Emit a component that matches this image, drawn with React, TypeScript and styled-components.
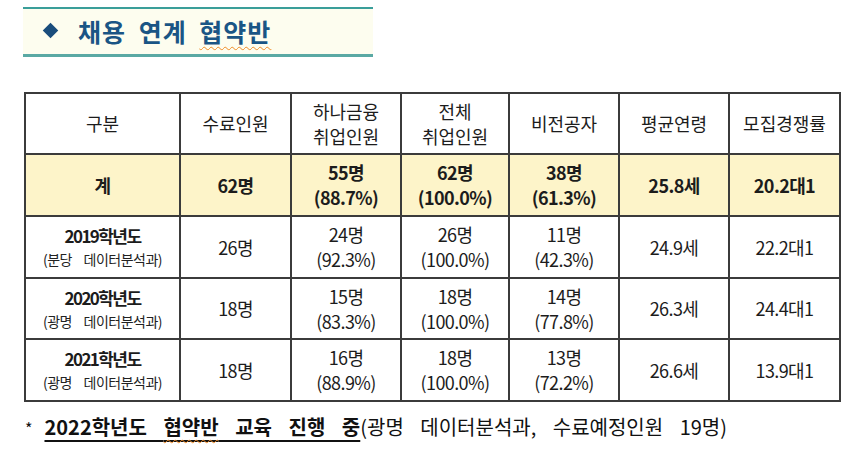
import React from "react";
import styled, { createGlobalStyle } from "styled-components";

const Global = createGlobalStyle`
  html, body { margin: 0; padding: 0; background: #ffffff; }
  body { font-family: "Noto Sans CJK KR", "Noto Sans", sans-serif; color: #111; }
`;

const Page = styled.div`
  width: 865px;
  height: 456px;
  padding: 7px 0 0 23px;
  box-sizing: border-box;
  display: flex;
  flex-direction: column;
`;

const TitleBox = styled.div`
  width: 350px;
  height: 50px;
  box-sizing: border-box;
  border-top: 2px solid #3a9e9a;
  border-bottom: 3px solid #5aa9a4;
  background: #fdfdef;
  display: flex;
  align-items: center;
  gap: 22px;
  padding-left: 22px;
  padding-bottom: 2px;
`;

const Diamond = styled.span`
  width: 11px;
  height: 11px;
  background: #1a4d7c;
  transform: rotate(45deg);
  display: inline-block;
`;

const TitleText = styled.h1`
  margin: 0;
  font-size: 25px;
  font-weight: 700;
  color: #1a5585;
  letter-spacing: 1px;
  word-spacing: 6px;
  line-height: 30px;
`;

const Squiggle = styled.span`
  text-decoration: underline wavy #f08a24;
  text-decoration-thickness: 1px;
  text-underline-offset: 4px;
`;

const Table = styled.table`
  margin-top: 35px;
  margin-left: 1px;
  border-collapse: collapse;
  table-layout: fixed;
  width: 815px;
  font-size: 18px;
`;

const Row = styled.tr<{ $h: number; $total?: boolean }>`
  height: ${(p) => p.$h}px;
  background: ${(p) => (p.$total ? "#fdf4c9" : "#ffffff")};
  font-weight: ${(p) => (p.$total ? 700 : 400)};
`;

const Cell = styled.td<{ $head?: boolean }>`
  border: 2px solid #3b3b3b;
  text-align: center;
  vertical-align: middle;
  padding: 0;
  line-height: 25px;
  color: #1c1c1c;
  letter-spacing: ${(p) => (p.$head ? "0px" : "-0.6px")};
  font-weight: inherit;
`;

const Year = styled.div`
  font-weight: 700;
  font-size: 17px;
  line-height: 24px;
  letter-spacing: -1.6px;
`;

const Dept = styled.div`
  font-size: 14px;
  line-height: 22px;
  color: #222;
  letter-spacing: -0.5px;
  word-spacing: 9px;
`;

const Foot = styled.p`
  margin: 11px 0 0 2px;
  font-size: 20px;
  line-height: 28px;
  color: #111;
  letter-spacing: 0px;
  word-spacing: 12px;
`;

const Star = styled.span`
  font-size: 16px;
  margin-right: 12px;
`;

const Em = styled.span`
  font-weight: 700;
  text-decoration: underline;
  text-underline-offset: 5px;
  text-decoration-thickness: 2px;
`;

const widths = [155, 111, 110, 108, 110, 110, 111];

const headers: React.ReactNode[] = [
  "구분",
  "수료인원",
  <>하나금융<br />취업인원</>,
  <>전체<br />취업인원</>,
  "비전공자",
  "평균연령",
  "모집경쟁률",
];

type R = { year: string; dept: string; cells: [string, string, string, string, string, string, string, string] };

const rows: R[] = [
  { year: "2019학년도", dept: "(분당 데이터분석과)", cells: ["26명", "24명", "(92.3%)", "26명", "(100.0%)", "11명", "(42.3%)", "24.9세"] },
  { year: "2020학년도", dept: "(광명 데이터분석과)", cells: ["18명", "15명", "(83.3%)", "18명", "(100.0%)", "14명", "(77.8%)", "26.3세"] },
  { year: "2021학년도", dept: "(광명 데이터분석과)", cells: ["18명", "16명", "(88.9%)", "18명", "(100.0%)", "13명", "(72.2%)", "26.6세"] },
];
const ratios = ["22.2대1", "24.4대1", "13.9대1"];
const heights = [62, 61, 62];

export default function App() {
  return (
    <>
      <Global />
      <Page>
        <TitleBox>
          <Diamond />
          <TitleText>
            채용 연계 <Squiggle>협약반</Squiggle>
          </TitleText>
        </TitleBox>
        <Table>
          <colgroup>
            {widths.map((w, i) => (
              <col key={i} style={{ width: w }} />
            ))}
          </colgroup>
          <tbody>
            <Row $h={61}>
              {headers.map((h, i) => (
                <Cell key={i} $head>{h}</Cell>
              ))}
            </Row>
            <Row $h={62} $total>
              <Cell>계</Cell>
              <Cell>62명</Cell>
              <Cell>55명<br />(88.7%)</Cell>
              <Cell>62명<br />(100.0%)</Cell>
              <Cell>38명<br />(61.3%)</Cell>
              <Cell>25.8세</Cell>
              <Cell>20.2대1</Cell>
            </Row>
            {rows.map((r, i) => (
              <Row key={r.year} $h={heights[i]}>
                <Cell>
                  <Year>{r.year}</Year>
                  <Dept>{r.dept}</Dept>
                </Cell>
                <Cell>{r.cells[0]}</Cell>
                <Cell>{r.cells[1]}<br />{r.cells[2]}</Cell>
                <Cell>{r.cells[3]}<br />{r.cells[4]}</Cell>
                <Cell>{r.cells[5]}<br />{r.cells[6]}</Cell>
                <Cell>{r.cells[7]}</Cell>
                <Cell>{ratios[i]}</Cell>
              </Row>
            ))}
          </tbody>
        </Table>
        <Foot>
          <Star>*</Star>
          <Em>
            2022학년도 <Squiggle>협약반</Squiggle> 교육 진행 중
          </Em>
          (광명 데이터분석과, 수료예정인원 19명)
        </Foot>
      </Page>
    </>
  );
}
